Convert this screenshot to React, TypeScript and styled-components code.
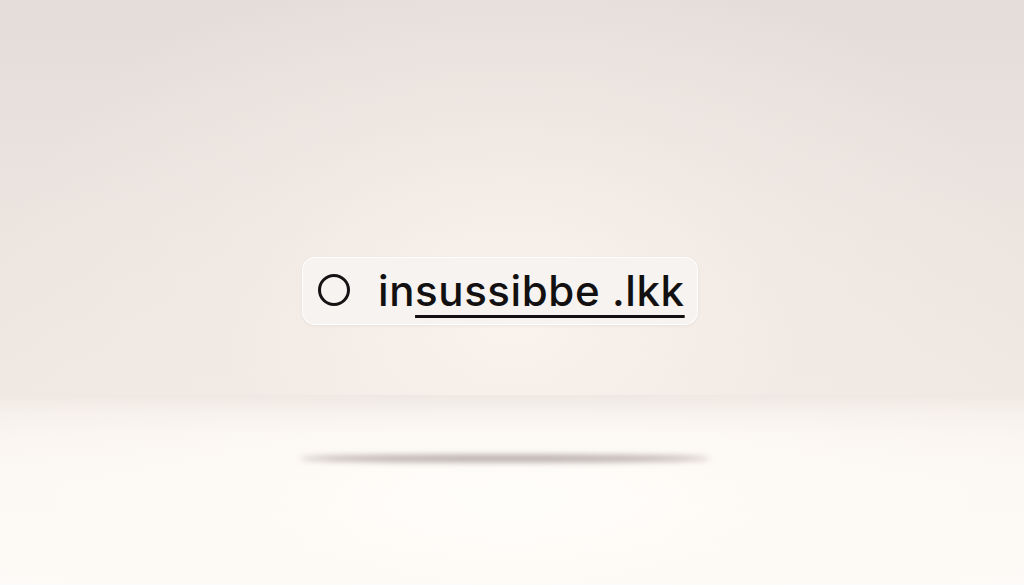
import styled, { createGlobalStyle } from "styled-components";

const Global = createGlobalStyle`
    html, body {
        margin: 0;
        padding: 0;
        width: 100%;
        height: 100%;
    }
    body {
        background: #f3ece7;
        font-family: Inter, "Noto Sans", "Liberation Sans", sans-serif;
    }
`;

function App(){

    return(
        <S.Page>
            <Global />
            <S.Wall>
                <S.Pill>
                    <S.Ring viewBox="0 0 34 34">
                        <circle cx="17" cy="17" r="14.5" fill="none" stroke="#141212" strokeWidth="3" />
                    </S.Ring>
                    <S.Label>
                        in<S.Linked>sussibbe .lkk</S.Linked>
                    </S.Label>
                </S.Pill>
            </S.Wall>
            <S.Floor>
                <S.Shadow />
            </S.Floor>
        </S.Page>
    )
}

const S = {

    Page: styled.div`
        display: flex;
        flex-direction: column;
        width: 1024px;
        height: 585px;
        overflow: hidden;
    `,

    Wall: styled.div`
        display: flex;
        justify-content: center;
        height: 395px;
        padding-top: 257px;
        box-sizing: border-box;
        background:
            radial-gradient(ellipse 520px 380px at 50% 80%, rgba(250, 243, 238, 0.95) 0%, rgba(245, 237, 231, 0.5) 55%, rgba(245, 237, 231, 0) 100%),
            linear-gradient(to bottom, #e3dcd8 0%, #ebe4df 55%, #efe8e3 100%);
    `,

    Floor: styled.div`
        display: flex;
        justify-content: center;
        flex: 1;
        padding-top: 60px;
        box-sizing: border-box;
        background:
            linear-gradient(to bottom, rgba(239, 232, 227, 1) 0px, rgba(246, 240, 235, 0.6) 18px, rgba(250, 246, 242, 0) 40px),
            radial-gradient(ellipse 600px 170px at 50% 55%, rgba(255, 253, 250, 1) 0%, rgba(253, 249, 245, 0.6) 60%, rgba(253, 249, 245, 0) 100%),
            linear-gradient(to bottom, #f7f1ec 0px, #fbf7f3 70px, #fdfaf7 100%);
    `,

    Pill: styled.div`
        display: flex;
        align-items: center;
        gap: 27px;
        width: 396px;
        height: 68px;
        margin-right: 24px;
        padding: 0 14px 0 14px;
        box-sizing: border-box;
        background: #f6f3f1;
        border: 1px solid rgba(255, 255, 255, 0.9);
        border-radius: 13px;
        box-shadow: 0 1px 3px rgba(160, 140, 130, 0.12);
    `,

    Ring: styled.svg`
        width: 34px;
        height: 34px;
        flex-shrink: 0;
        margin-top: -2px;
    `,

    Label: styled.div`
        font-size: 42px;
        font-weight: 450;
        color: #121010;
        letter-spacing: 0.6px;
        line-height: 1;
        white-space: nowrap;
    `,

    Linked: styled.span`
        text-decoration: underline;
        text-decoration-thickness: 3px;
        text-underline-offset: 9px;
    `,

    Shadow: styled.div`
        width: 410px;
        height: 7px;
        border-radius: 50%;
        background: rgba(130, 110, 108, 0.6);
        filter: blur(3px);
        margin-right: 14px;
    `,

}

export default App;
